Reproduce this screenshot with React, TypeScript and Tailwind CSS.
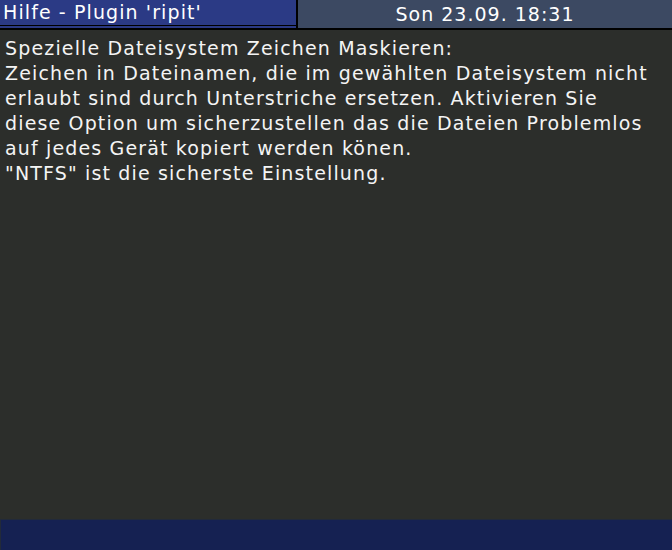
export default function App() {
  const font = { fontFamily: '"DejaVu Sans", sans-serif' };
  return (
    <div className="w-[672px] h-[550px] bg-[#2c2e2b] flex flex-col overflow-hidden text-white" style={font}>
      <div className="flex h-[30px] shrink-0 bg-black">
        <div className="w-[296px] h-[29px] flex flex-col">
          <div className="h-[25px] bg-[#2b3a85] flex items-center pl-[3px] text-[19px] leading-none tracking-[1.1px]">
            Hilfe - Plugin 'ripit'
          </div>
          <div className="h-[1px] bg-black" />
          <div className="h-[2px] bg-[#2b3a85]" />
        </div>
        <div className="w-[2px]" />
        <div className="flex-1 h-[28px] bg-[#3c4962] flex items-center justify-center text-[19px] leading-none tracking-[1px]">
          Son 23.09. 18:31
        </div>
      </div>
      <div className="flex-1 px-[5px] pt-[6px] text-[19px] leading-[25px] tracking-[1.15px] text-[#f4f4f4] whitespace-nowrap">
        <div>Spezielle Dateisystem Zeichen Maskieren:</div>
        <div>Zeichen in Dateinamen, die im gewählten Dateisystem nicht</div>
        <div>erlaubt sind durch Unterstriche ersetzen. Aktivieren Sie</div>
        <div>diese Option um sicherzustellen das die Dateien Problemlos</div>
        <div>auf jedes Gerät kopiert werden könen.</div>
        <div>"NTFS" ist die sicherste Einstellung.</div>
      </div>
      <div className="h-[31px] shrink-0 bg-[#152152] border-t border-l border-[#222a3a]" />
    </div>
  );
}
